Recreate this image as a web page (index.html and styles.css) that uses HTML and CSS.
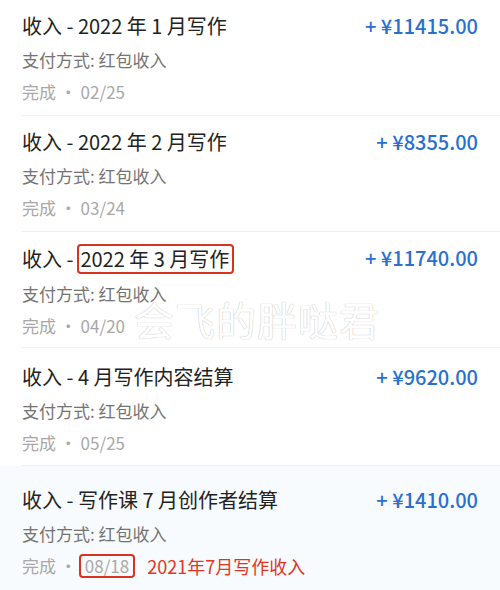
FILE: index.html
```html
<!DOCTYPE html>
<html lang="zh-CN">
<head>
  <meta charset="UTF-8">
  <meta name="viewport" content="width=device-width, initial-scale=1.0">
  <title>收入记录</title>
  <link rel="stylesheet" href="styles.css">
</head>
<body>
  <ul class="bill-list">
    <li class="bill">
      <div class="bill-main">
        <p class="bill-title">收入 - 2022 年 1 月写作</p>
        <p class="bill-method">支付方式: 红包收入</p>
        <p class="bill-date">完成 · 02/25</p>
      </div>
      <span class="bill-amount">+ ¥11415.00</span>
    </li>
    <li class="bill">
      <div class="bill-main">
        <p class="bill-title">收入 - 2022 年 2 月写作</p>
        <p class="bill-method">支付方式: 红包收入</p>
        <p class="bill-date">完成 · 03/24</p>
      </div>
      <span class="bill-amount">+ ¥8355.00</span>
    </li>
    <li class="bill">
      <div class="bill-main">
        <p class="bill-title">收入 -<span class="mark mark-title">2022 年 3 月写作</span></p>
        <p class="bill-method">支付方式: 红包收入</p>
        <p class="bill-date">完成 · 04/20</p>
      </div>
      <span class="bill-amount">+ ¥11740.00</span>
    </li>
    <li class="bill">
      <div class="bill-main">
        <p class="bill-title">收入 - 4 月写作内容结算</p>
        <p class="bill-method">支付方式: 红包收入</p>
        <p class="bill-date">完成 · 05/25</p>
      </div>
      <span class="bill-amount">+ ¥9620.00</span>
    </li>
    <li class="bill bill-active">
      <div class="bill-main">
        <p class="bill-title">收入 - 写作课 7 月创作者结算</p>
        <p class="bill-method">支付方式: 红包收入</p>
        <p class="bill-date">完成 ·<span class="mark mark-date">08/18</span><span class="note">2021年7月写作收入</span></p>
      </div>
      <span class="bill-amount">+ ¥1410.00</span>
    </li>
  </ul>

  <div class="watermark">会飞的胖哒君</div>
</body>
</html>
```

FILE: styles.css
```css
* {
  margin: 0;
  padding: 0;
  box-sizing: border-box;
}

body {
  font-family: "Noto Sans CJK SC", "Noto Sans", sans-serif;
  background: #ffffff;
  color: #222222;
  width: 500px;
  height: 590px;
  overflow: hidden;
  position: relative;
}

.bill-list {
  list-style: none;
}

.bill {
  display: flex;
  justify-content: space-between;
  align-items: flex-start;
  height: 116px;
  padding: 12px 22px 0 22px;
  position: relative;
}

.bill::after {
  content: "";
  position: absolute;
  left: 22px;
  right: 0;
  bottom: 0;
  height: 1px;
  background: #f0f0f0;
}

.bill:nth-child(4) {
  height: 118px;
  padding-top: 15px;
}

.bill-active {
  background: #f8fbfd;
  height: 130px;
  padding-top: 20px;
}

.bill-active::after {
  display: none;
}

.bill-main {
  display: flex;
  flex-direction: column;
  gap: 8px;
}

.bill-title {
  font-size: 20px;
  line-height: 28px;
  color: #222222;
}

.bill-method {
  font-size: 17px;
  line-height: 24px;
  color: #737373;
}

.bill-date {
  font-size: 17px;
  line-height: 24px;
  color: #a8a8a8;
  display: flex;
  align-items: center;
}

.bill-amount {
  font-size: 20px;
  line-height: 28px;
  font-weight: 500;
  color: #2870cf;
}

.mark {
  border: 2px solid #d8331f;
  border-radius: 4px;
}

.mark-title {
  display: inline-block;
  margin-left: 4px;
  padding: 0 3px 0 1px;
  line-height: 26px;
}

.mark-date {
  display: inline-block;
  margin-left: 2px;
  padding: 0 4px;
  line-height: 20px;
}

.note {
  margin-left: 12px;
  color: #e0361f;
  font-size: 18px;
}

.watermark {
  position: absolute;
  left: 134px;
  top: 304px;
  font-size: 40px;
  line-height: 30px;
  letter-spacing: 1px;
  color: #ffffff;
  text-shadow: 0 0 1px #bdbdbd, 0 0 1px #cfcfcf;
  pointer-events: none;
}
```
